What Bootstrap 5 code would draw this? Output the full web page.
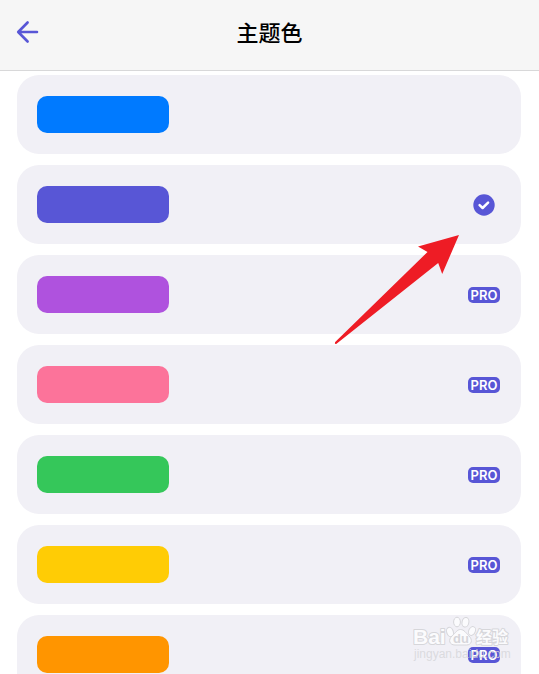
<!DOCTYPE html>
<html lang="zh-CN">
<head>
<meta charset="utf-8">
<meta name="viewport" content="width=device-width, initial-scale=1">
<title>主题色</title>
<link href="https://cdn.jsdelivr.net/npm/bootstrap@5.3.0/dist/css/bootstrap.min.css" rel="stylesheet">
<style>
  :root { --accent: #5856d6; }
  body { font-family: Inter, "Noto Sans CJK SC", sans-serif; background: #fff; }
  .top-bar { height: 71px; background: #f6f6f6; border-bottom: 1px solid #d8d8d9; padding: 0 16px; }
  .back-btn { width: 24px; height: 24px; margin-bottom: 6px; color: var(--accent); }
  .top-title { font-size: 22px; line-height: 32px; font-weight: 500; color: #000; margin-bottom: 4px; }
  .theme-list { padding: 4px 18px 20px 17px; gap: 11px; scrollbar-width: none; }
  .theme-list::-webkit-scrollbar { display: none; }
  .theme-row { height: 79px; padding: 0 21px 0 20px; background: #f1f0f6; border-radius: 22px; }
  .swatch { width: 132px; height: 37px; border-radius: 10px; }
  .c-blue { background: #007aff; }
  .c-indigo { background: #5856d6; }
  .c-purple { background: #af52de; }
  .c-pink { background: #fc739a; }
  .c-green { background: #35c75a; }
  .c-yellow { background: #ffcc05; }
  .c-orange { background: #ff9500; }
  .row-state { width: 32px; }
  .pro-tag { width: 32px; height: 16px; border-radius: 5px; background: var(--accent); color: #fff; font-size: 13px; line-height: 16px; font-weight: 600; }
  .pointer { left: 334px; top: 234px; pointer-events: none; }
  .watermark { right: 25px; bottom: 8px; pointer-events: none; }
  .watermark text { paint-order: stroke; stroke-linejoin: round; }
</style>
<script src="https://cdn.jsdelivr.net/npm/bootstrap@5.3.0/dist/js/bootstrap.bundle.min.js" defer></script>
</head>
<body class="vh-100 d-flex flex-column overflow-hidden position-relative">
  <header class="top-bar d-flex align-items-center flex-shrink-0">
    <button type="button" class="back-btn btn p-0 border-0 d-flex" aria-label="返回">
      <svg width="24" height="24" viewBox="0 0 24 24" fill="none" stroke="currentColor" stroke-width="2.6" stroke-linecap="round" stroke-linejoin="round" aria-hidden="true"><path d="M21 12H2.3M11.6 2.5 2.2 12l9.4 9.5"/></svg>
    </button>
    <h1 class="top-title flex-grow-1 text-center">主题色</h1>
    <span class="back-btn" aria-hidden="true"></span>
  </header>

  <main class="theme-list d-flex flex-column flex-grow-1 overflow-auto">
    <button type="button" class="theme-row btn border-0 w-100 d-flex align-items-center justify-content-between flex-shrink-0" aria-label="蓝色">
      <span class="swatch c-blue"></span>
    </button>
    <button type="button" class="theme-row btn border-0 w-100 d-flex align-items-center justify-content-between flex-shrink-0" aria-label="靛蓝色" aria-pressed="true">
      <span class="swatch c-indigo"></span>
      <span class="row-state d-flex justify-content-center">
        <svg width="22" height="22" viewBox="0 0 22 22" aria-hidden="true"><circle cx="11" cy="11" r="10.7" fill="#5856d6"/><path d="m6.6 11.2 3 2.8 5.5-5.4" fill="none" stroke="#fff" stroke-width="2.5" stroke-linecap="round" stroke-linejoin="round"/></svg>
      </span>
    </button>
    <button type="button" class="theme-row btn border-0 w-100 d-flex align-items-center justify-content-between flex-shrink-0">
      <span class="swatch c-purple"></span>
      <span class="pro-tag d-flex justify-content-center">PRO</span>
    </button>
    <button type="button" class="theme-row btn border-0 w-100 d-flex align-items-center justify-content-between flex-shrink-0">
      <span class="swatch c-pink"></span>
      <span class="pro-tag d-flex justify-content-center">PRO</span>
    </button>
    <button type="button" class="theme-row btn border-0 w-100 d-flex align-items-center justify-content-between flex-shrink-0">
      <span class="swatch c-green"></span>
      <span class="pro-tag d-flex justify-content-center">PRO</span>
    </button>
    <button type="button" class="theme-row btn border-0 w-100 d-flex align-items-center justify-content-between flex-shrink-0">
      <span class="swatch c-yellow"></span>
      <span class="pro-tag d-flex justify-content-center">PRO</span>
    </button>
    <button type="button" class="theme-row btn border-0 w-100 d-flex align-items-center justify-content-between flex-shrink-0">
      <span class="swatch c-orange"></span>
      <span class="pro-tag d-flex justify-content-center">PRO</span>
    </button>
  </main>

  <svg class="pointer position-absolute" width="126" height="112" viewBox="0 0 126 112" aria-hidden="true">
    <path d="M125 1 84 12.5l9.5 5.5L1.2 108q-1 2.200 1 2l102-81 4 11Z" fill="#ee1c25"/>
  </svg>

  <svg class="watermark position-absolute" width="101" height="50" viewBox="0 0 101 50" font-family="'Liberation Sans', 'Noto Sans CJK SC', sans-serif" aria-label="Baidu 经验">
    <g fill="#fbfbfd" stroke="#d6d6da" stroke-width="2">
      <text x="0" y="28" font-size="21" font-weight="700">Bai</text>
      <g stroke-width="1">
        <ellipse cx="37" cy="16" rx="3.3" ry="4.8" transform="rotate(-18 37 16)"/>
        <ellipse cx="44" cy="6" rx="3.4" ry="4.800"/>
        <ellipse cx="52.5" cy="6.200" rx="3.400" ry="4.800" transform="rotate(12 52 6)"/>
        <ellipse cx="59" cy="15" rx="3.300" ry="4.600" transform="rotate(25 59 15)"/>
        <path d="M47.500 13.500c3.500 0 5.500 3.500 8 6 5 4.500 3 9.500-2 9.500H42c-5.500 0-7.500-5-2.500-9.500 3-2.500 4.500-6 8-6Z"/>
      </g>
      <text x="63" y="27" font-size="16" font-weight="700">经验</text>
    </g>
    <text x="40" y="27" font-size="13" font-weight="700" fill="#d6d6da">du</text>
    <text x="1" y="42" font-size="12" fill="#d6d6da" fill-opacity=".85">jingyan.baidu.com</text>
  </svg>
</body>
</html>
